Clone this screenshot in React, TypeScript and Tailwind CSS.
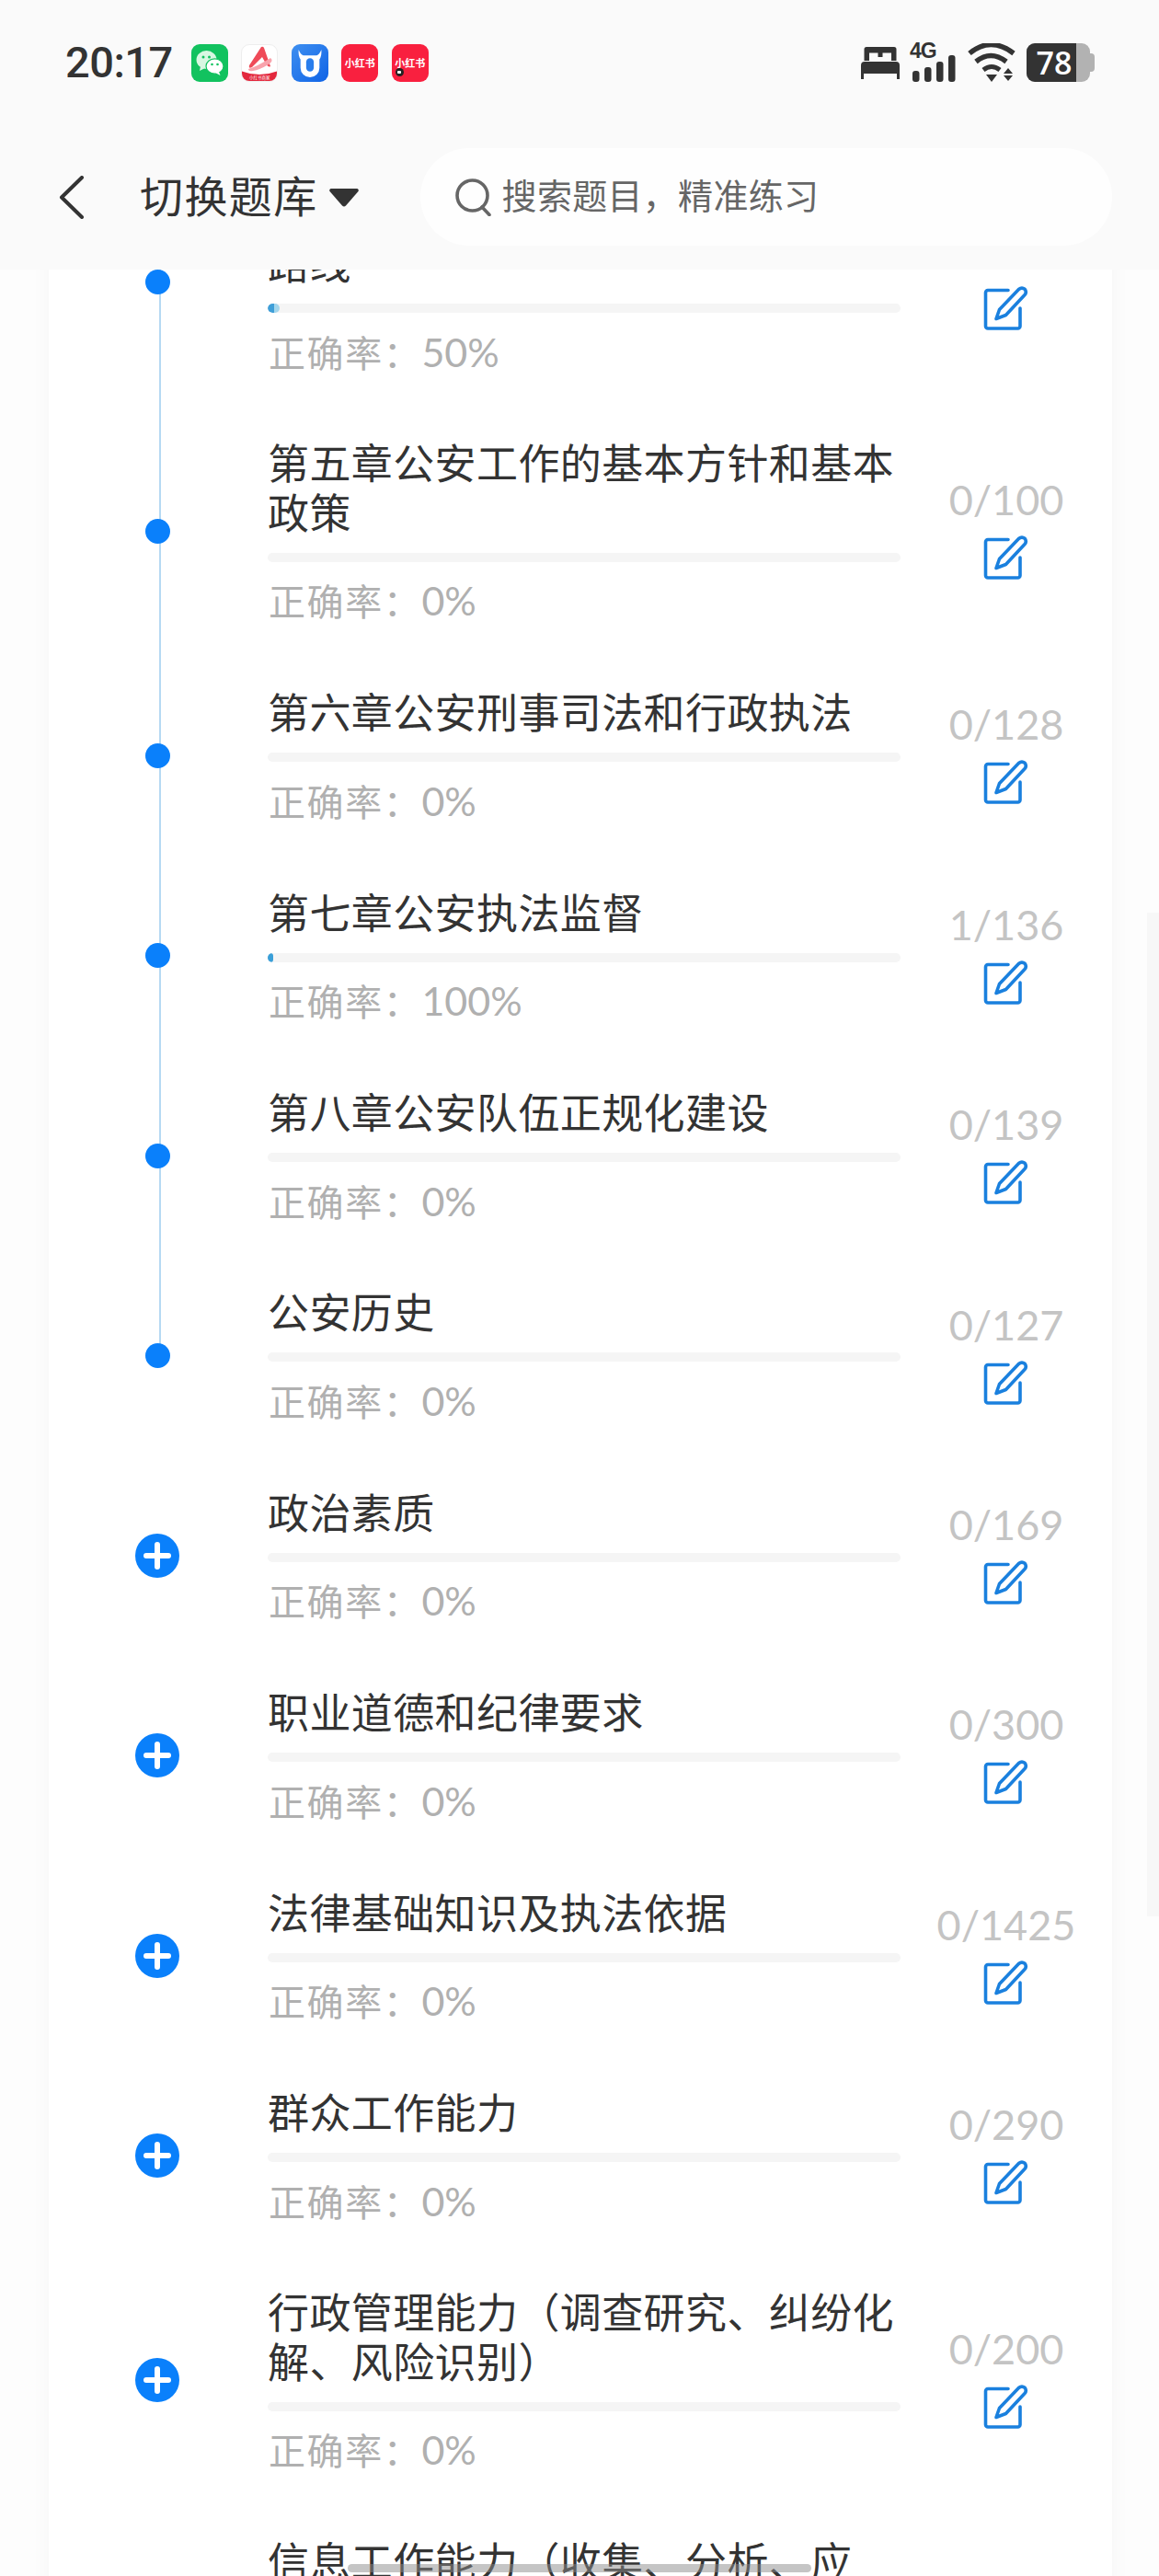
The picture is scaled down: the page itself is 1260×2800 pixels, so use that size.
import React from "react";

type Row = { title: string; count: string; rate: string; fill?: "half" | "tiny"; kind: "dot" | "plus"; lineTop?: boolean; lineBottom?: boolean };

const rows: Row[] = [
  { title: "第四章公安工作的根本宗旨和群众路线", count: "0/98", rate: "50%", fill: "half", kind: "dot", lineTop: true, lineBottom: true },
  { title: "第五章公安工作的基本方针和基本政策", count: "0/100", rate: "0%", kind: "dot", lineTop: true, lineBottom: true },
  { title: "第六章公安刑事司法和行政执法", count: "0/128", rate: "0%", kind: "dot", lineTop: true, lineBottom: true },
  { title: "第七章公安执法监督", count: "1/136", rate: "100%", fill: "tiny", kind: "dot", lineTop: true, lineBottom: true },
  { title: "第八章公安队伍正规化建设", count: "0/139", rate: "0%", kind: "dot", lineTop: true, lineBottom: true },
  { title: "公安历史", count: "0/127", rate: "0%", kind: "dot", lineTop: true },
  { title: "政治素质", count: "0/169", rate: "0%", kind: "plus" },
  { title: "职业道德和纪律要求", count: "0/300", rate: "0%", kind: "plus" },
  { title: "法律基础知识及执法依据", count: "0/1425", rate: "0%", kind: "plus" },
  { title: "群众工作能力", count: "0/290", rate: "0%", kind: "plus" },
  { title: "行政管理能力（调查研究、纠纷化解、风险识别）", count: "0/200", rate: "0%", kind: "plus" },
  { title: "信息工作能力（收集、分析、应用）", count: "0/180", rate: "0%", kind: "plus" },
];

function EditIcon() {
  return (
    <svg width="50" height="49" viewBox="0 0 50 49" fill="none" stroke="#1a80de" strokeWidth="3.6" strokeLinejoin="round" strokeLinecap="round">
      <path d="M27 5.5H5A2.5 2.5 0 0 0 2.5 8V44.5A2.5 2.5 0 0 0 5 47H37.5A2.5 2.5 0 0 0 40 44.5V25" />
      <path d="M14 36.5L17.5 26.5L38.5 4.5Q41.8 1.8 45 4.2Q47.6 7.5 45 10.5L24.5 32.5Z" />
    </svg>
  );
}

function AppIcons() {
  return (
    <div className="flex items-center gap-[14.5px] ml-[20px]">
      <div className="w-[40px] h-[41px] rounded-[9px] bg-[#12c25f] flex items-center justify-center">
        <svg width="32" height="30" viewBox="0 0 32 30">
          <ellipse cx="12.5" cy="12" rx="11" ry="10" fill="#d8f7e2" />
          <path d="M6 19l-1 5 6-3z" fill="#d8f7e2" />
          <ellipse cx="21.5" cy="19" rx="9.5" ry="8.2" fill="#ffffff" stroke="#12c25f" strokeWidth="1.2" />
          <path d="M26 25l1.5 4-5.5-3z" fill="#ffffff" />
          <circle cx="9" cy="9" r="1.5" fill="#12c25f" />
          <circle cx="15.5" cy="9" r="1.5" fill="#12c25f" />
          <circle cx="18.5" cy="17" r="1.3" fill="#12c25f" />
          <circle cx="24.5" cy="17" r="1.3" fill="#12c25f" />
        </svg>
      </div>
      <div className="relative w-[40px] h-[41px] rounded-[9px] bg-white border border-[#eeeeee] overflow-hidden">
        <svg width="40" height="41" viewBox="0 0 40 41" className="absolute left-[-1px] top-[-1px]">
          <path d="M0 29Q20 37 40 29V41H0Z" fill="#e3283d" />
          <path d="M22 3Q24 2 25 4L32 24Q30 26 27 21L23 14L12 25Q8 27 9 23Z" fill="#ef4a58" />
          <path d="M8 27Q18 24 32 15Q36 18 30 22Q20 28 13 29Q8 30 8 27Z" fill="#f8a3ac" />
        </svg>
        <span className="absolute left-0 right-0 bottom-[1px] text-white text-[4.5px] leading-[6px] text-center whitespace-nowrap">小红书商家</span>
      </div>
      <div className="w-[40px] h-[41px] rounded-[9px] bg-gradient-to-br from-[#3e8ff0] to-[#0e63e6] flex items-center justify-center">
        <svg width="28" height="33" viewBox="0 0 26 32" fill="none">
          <path d="M1 2Q3 7 6 8H20Q23 7 25 2Q25.5 9 23 12V21A10 10 0 0 1 3 21V12Q0.5 9 1 2Z" fill="#ffffff" />
          <rect x="9" y="11" width="8" height="14" rx="4" fill="#2a7eec" />
        </svg>
      </div>
      {[false, true].map((cam) => (
        <div key={String(cam)} className="relative w-[40px] h-[41px] rounded-[9px] bg-[#f9203f] flex items-center justify-center text-white font-bold text-[11px] leading-[14px] whitespace-nowrap">
          小红书
          {cam && (
            <span className="absolute left-[4px] bottom-[6px] w-[9px] h-[9px] rounded-full bg-[#222222] flex items-center justify-center">
              <span className="w-[4px] h-[3px] rounded-[1px] bg-white" />
            </span>
          )}
        </div>
      ))}
    </div>
  );
}

function StatusRight() {
  return (
    <div className="flex items-center ml-auto mr-[70px] text-[#333333]">
      <svg width="42" height="35" viewBox="0 0 42 35" fill="#333333">
        <path d="M6 0H36A2.5 2.5 0 0 1 38.5 2.5V15H33V6.5H23.5V11H18.5V6.5H9V15H3.5V2.5A2.5 2.5 0 0 1 6 0Z" />
        <path d="M4 16H38A4 4 0 0 1 42 20V35H39V29H3V35H0V20A4 4 0 0 1 4 16Z" />
      </svg>
      <div className="relative w-[50px] h-[42px] ml-[12px]">
        <span className="absolute left-[-1px] top-[-3px] font-['Liberation_Sans',sans-serif] font-bold text-[23px] leading-[22px] tracking-[-1px] text-[#333333]">4G</span>
        <svg className="absolute left-0 top-0" width="50" height="42" viewBox="0 0 50 42" fill="#333333">
          <rect x="2" y="30" width="7.5" height="12" rx="3" />
          <rect x="15" y="26" width="7.5" height="16" rx="3" />
          <rect x="28" y="20" width="7.5" height="22" rx="3" />
          <rect x="41" y="13" width="7.5" height="29" rx="3" />
        </svg>
      </div>
      <svg width="54" height="42" viewBox="0 0 54 42" fill="none" className="ml-[12px]">
        <path d="M2 11Q25 -8 50 11" stroke="#333333" strokeWidth="5.5" />
        <path d="M9 20Q25 7 42 20" stroke="#333333" strokeWidth="5.5" />
        <path d="M17 29Q26 22 35 29" stroke="#333333" strokeWidth="5" />
        <path d="M20 34H32L26 42Z" fill="#333333" />
        <path d="M44 27L49 33H39Z M39 35H49L44 41Z" fill="#333333" />
      </svg>
      <div className="flex items-center ml-[10px]">
        <div className="relative w-[69px] h-[42px] rounded-[9px] bg-[#b2b2b2] overflow-hidden">
          <div className="w-[54px] h-full bg-[#333333] flex items-center justify-center pl-[6px] text-white text-[34px] font-semibold leading-[42px] font-['Open_Sans',sans-serif]">78</div>
        </div>
        <div className="w-[5px] h-[20px] rounded-r-[4px] bg-[#b2b2b2]" />
      </div>
    </div>
  );
}

function ListRow({ row }: { row: Row }) {
  return (
    <div className="flex">
      <div className="relative w-[236px] shrink-0 flex items-center justify-center">
        {row.lineTop && <div className="absolute left-[120px] top-0 h-1/2 w-[2px] bg-[#b6d9f3]" />}
        {row.lineBottom && <div className="absolute left-[120px] top-1/2 h-1/2 w-[2px] bg-[#b6d9f3]" />}
        {row.kind === "dot" ? (
          <div className="relative w-[27px] h-[27px] rounded-full bg-[#0a80fb]" />
        ) : (
          <div className="relative w-[48px] h-[48px] rounded-full bg-[#0a80fb] flex items-center justify-center">
            <svg width="30" height="30" viewBox="0 0 30 30" stroke="#ffffff" strokeWidth="6" strokeLinecap="round">
              <path d="M3 15H27M15 3V27" />
            </svg>
          </div>
        )}
      </div>
      <div className="ml-[2px] w-[688px] shrink-0 pt-[33.5px] pb-[32.4px]">
        <div className="text-[45px] leading-[53.5px] tracking-[0.4px] text-[#333333]">{row.title}</div>
        <div className="mt-[18.5px] h-[10px] rounded-full bg-[#f5f5f5] overflow-hidden">
          {row.fill === "half" && (
            <div className="w-[13px] h-full rounded-full bg-gradient-to-r from-[#3f9fd8] from-55% to-[#a3d6ec] to-55%" />
          )}
          {row.fill === "tiny" && <div className="w-[6px] h-full rounded-full bg-[#3a9fd8]" />}
        </div>
        <div className="mt-[13.5px] h-[56px] text-[40px] leading-[56px] tracking-[1.6px] text-[#b0b0b0] pl-[1px] whitespace-nowrap">
          正确率：<span className="font-['Lato',sans-serif] tracking-normal text-[43px]">{row.rate}</span>
        </div>
      </div>
      <div className="w-[230px] shrink-0 flex flex-col items-center justify-center">
        <div className="h-[38px] leading-[38px] text-[45px] text-[#c4c4c4] font-['Lato',sans-serif] whitespace-nowrap">{row.count}</div>
        <div className="mt-[19px] h-[49px]">
          <EditIcon />
        </div>
      </div>
    </div>
  );
}

export default function App() {
  return (
    <div className="relative w-[1260px] h-[2800px] overflow-hidden bg-[#fdfdfd] flex flex-col font-['Noto_Sans_CJK_SC','Noto_Sans',sans-serif]">
      <header className="relative z-10 h-[293px] shrink-0 bg-[#fafafa]">
        <div className="h-[136px] flex items-center pl-[71px]">
          <span className="font-['Roboto',sans-serif] font-medium text-[47px] leading-[56px] text-[#333333] tracking-[-0.5px]">20:17</span>
          <AppIcons />
          <StatusRight />
        </div>
        <div className="mt-[25px] h-[106px] flex items-center pl-[64px]">
          <svg width="28" height="47" viewBox="0 0 28 47" fill="none" stroke="#333333" strokeWidth="4" strokeLinecap="round" strokeLinejoin="round">
            <path d="M25 2L3 23.5L25 45" />
          </svg>
          <span className="ml-[60px] mb-[6px] text-[47px] leading-[60px] tracking-[1.4px] text-[#333333] whitespace-nowrap">切换题库</span>
          <svg width="32" height="20" viewBox="0 0 32 20" className="ml-[12px] mt-[2px]" fill="#333333">
            <path d="M2 0H30A2 2 0 0 1 31.5 3L18 18.5A3 3 0 0 1 14 18.5L0.5 3A2 2 0 0 1 2 0Z" />
          </svg>
          <div className="ml-[67px] w-[752px] h-[106px] rounded-full bg-[#fefefe] flex items-center pl-[38px]">
            <svg width="40" height="41" viewBox="0 0 40 41" fill="none" stroke="#666666" strokeWidth="3.6" strokeLinecap="round">
              <circle cx="18.5" cy="18.5" r="16.5" />
              <path d="M29 31L37 39.5" />
            </svg>
            <span className="ml-[11px] mb-[6px] text-[38px] leading-[50px] tracking-[0.3px] text-[#666666] whitespace-nowrap">搜索题目，精准练习</span>
          </div>
        </div>
      </header>

      <main className="flex-1 overflow-hidden">
        <div className="mx-[53px] mt-[-122px] w-[1156px] bg-white shadow-[0_0_22px_rgba(0,0,0,0.035)]">
          {rows.map((row) => (
            <ListRow key={row.title} row={row} />
          ))}
        </div>
      </main>

      <div className="absolute right-0 top-[992px] h-[1091px] w-[13px] bg-[#f7f7f7]" />
      <div className="absolute left-[378px] top-[2787px] h-[9px] w-[504px] rounded-full bg-[#8c8c8c]/50" />
    </div>
  );
}
